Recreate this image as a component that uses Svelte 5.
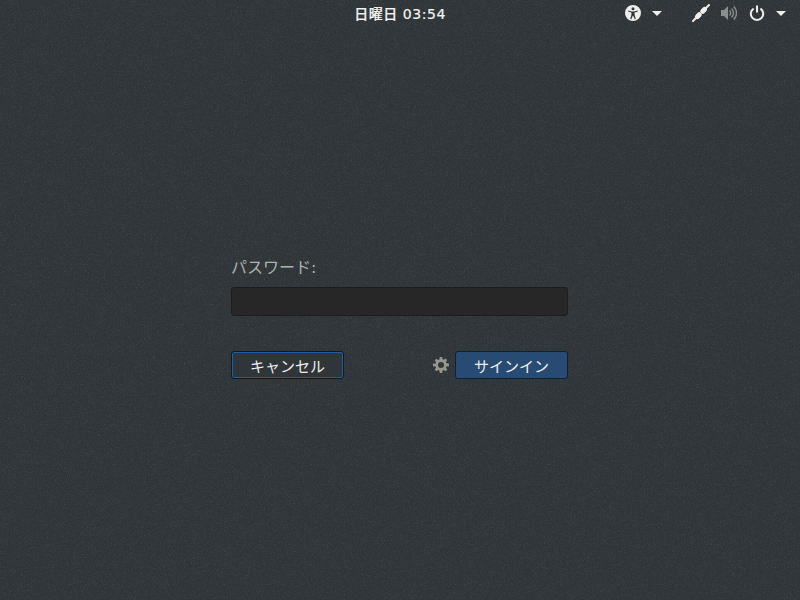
<script lang="ts">
  let password = $state("");
</script>

<div class="screen">
  <svg class="noise" width="800" height="600" aria-hidden="true">
    <filter id="grain" x="0" y="0" width="100%" height="100%">
      <feTurbulence type="fractalNoise" baseFrequency="1.1" numOctaves="1" seed="7" />
      <feColorMatrix values="0 0 0 0 0.05  0 0 0 0 0.07  0 0 0 0 0.08  3 0 0 0 -1.2" />
    </filter>
    <filter id="specks" x="0" y="0" width="100%" height="100%">
      <feTurbulence type="fractalNoise" baseFrequency="1.3" numOctaves="1" seed="19" />
      <feColorMatrix values="0 0 0 0 0.45  0 0 0 0 0.55  0 0 0 0 0.55  3 0 0 0 -1.5" />
    </filter>
    <rect width="800" height="600" filter="url(#grain)" opacity="0.3" />
    <rect width="800" height="600" filter="url(#specks)" opacity="0.1" />
  </svg>

  <header class="bar">
    <div></div>
    <div class="clock">日曜日 03:54</div>
    <div class="status">
      <svg class="a11y" width="16" height="16" viewBox="0 0 16 16">
        <path fill="#eeeeec" fill-rule="evenodd" d="M8 0a8 8 0 1 1 0 16A8 8 0 0 1 8 0zM8 2.200a1.500 1.500 0 1 0 0 3 1.500 1.500 0 0 0 0-3zM3.400 5.600l-.3 1 3.300 1v2.200L5.200 14l1 .3L7.700 11h.6l1.500 3.300 1-.3-1.200-4.200V7.600l3.300-1-.3-1-3.600.9H7z" />
      </svg>
      <span class="caret"></span>
      <svg class="net" width="18" height="18" viewBox="0 0 18 18">
        <g fill="none" stroke="#eeeeec" stroke-linecap="round">
          <path stroke-width="2" d="M1 17l4-4" />
          <path stroke-width="5" d="M5.500 12.500L7.300 10.700" />
          <path stroke-width="5" d="M10.700 7.300L12.500 5.500" />
          <path stroke-width="2" d="M13 5l4-4" />
        </g>
      </svg>
      <svg class="vol" width="16" height="16" viewBox="0 0 16 16">
        <path fill="#8a8e8c" d="M0 5h3l4-4v14l-4-4H0z" />
        <path fill="none" stroke="#8a8e8c" stroke-width="1.400" d="M8.600 5.500a3.500 3.500 0 0 1 0 5M10.600 3.500a6.400 6.400 0 0 1 0 9M12.800 1.500a9.200 9.200 0 0 1 0 13" />
      </svg>
      <svg class="power" width="16" height="16" viewBox="0 0 16 16">
        <path fill="none" stroke="#eeeeec" stroke-width="2" d="M8 0.500v7" />
        <path fill="none" stroke="#eeeeec" stroke-width="2" d="M4.600 3.600a6.200 6.200 0 1 0 6.800 0" />
      </svg>
      <span class="caret"></span>
    </div>
  </header>

  <main class="prompt">
    <label class="label" for="pw">パスワード:</label>
    <input id="pw" class="entry" type="password" bind:value={password} />
    <div class="actions">
      <button class="btn cancel">キャンセル</button>
      <div class="right">
        <svg class="gear" width="16" height="16" viewBox="0 0 16 16">
          <path fill="#96968c" fill-rule="evenodd" d="M6.800 0h2.400l.3 2.200 1.200.5L12.500 1.400l1.700 1.700-1.300 1.800.5 1.200L16 6.800v2.400l-2.600.4-.5 1.200 1.300 1.800-1.700 1.700-1.800-1.300-1.200.5L9.200 16H6.800l-.4-2.500-1.200-.5-1.800 1.300-1.700-1.700 1.300-1.800-.5-1.200L0 9.200V6.800l2.500-.4.500-1.200-1.300-1.800 1.700-1.700 1.800 1.300 1.200-.5zM8 5a3 3 0 1 0 0 6 3 3 0 0 0 0-6z" />
        </svg>
        <button class="btn signin">サインイン</button>
      </div>
    </div>
  </main>
</div>

<style>
  :global(body) {
    margin: 0;
    background: #2e3436;
  }
  .screen {
    position: relative;
    width: 800px;
    height: 600px;
    overflow: hidden;
    background: #2e3437;
    font-family: "DejaVu Sans", "Noto Sans CJK JP", sans-serif;
    color: #eeeeec;
  }
  .noise {
    position: absolute;
    inset: 0;
  }
  .bar {
    position: relative;
    height: 26px;
    display: grid;
    grid-template-columns: 1fr auto 1fr;
    align-items: center;
  }
  .clock {
    font-size: 14px;
    font-weight: 500;
    letter-spacing: 0.55px;
    color: #f4f4f2;
    -webkit-text-stroke: 0.2px #eeeeec;
  }
  .status {
    display: flex;
    align-items: center;
    justify-content: flex-end;
    padding-right: 14px;
  }
  .caret {
    width: 0;
    height: 0;
    border-left: 5px solid transparent;
    border-right: 5px solid transparent;
    border-top: 5px solid #eeeeec;
    margin-left: 11px;
  }
  .net {
    margin-left: 30px;
  }
  .vol {
    margin-left: 11px;
  }
  .power {
    margin-left: 12px;
  }
  .prompt {
    position: relative;
    width: 337px;
    margin: 233px 0 0 231px;
    display: flex;
    flex-direction: column;
  }
  .label {
    font-size: 16px;
    line-height: 18px;
    color: #b0b2ae;
  }
  .entry {
    box-sizing: border-box;
    height: 29px;
    margin-top: 10px;
    padding: 0;
    background: #272727;
    border: 1px solid #1b1e1f;
    border-radius: 3px;
    outline: none;
    color: #eeeeec;
  }
  .actions {
    display: flex;
    justify-content: space-between;
    align-items: center;
    margin-top: 35px;
  }
  .right {
    display: flex;
    align-items: center;
    gap: 6px;
  }
  .btn {
    box-sizing: border-box;
    width: 113px;
    height: 28px;
    padding: 0;
    border-radius: 3px;
    font-family: inherit;
    font-size: 15px;
    color: #eeeeec;
  }
  .cancel {
    background: #2f3538;
    border: 1px solid #14181a;
    box-shadow: inset 0 0 0 1px #1a5fa5;
  }
  .signin {
    background: #274b73;
    border: 1px solid #14202c;
  }
</style>
